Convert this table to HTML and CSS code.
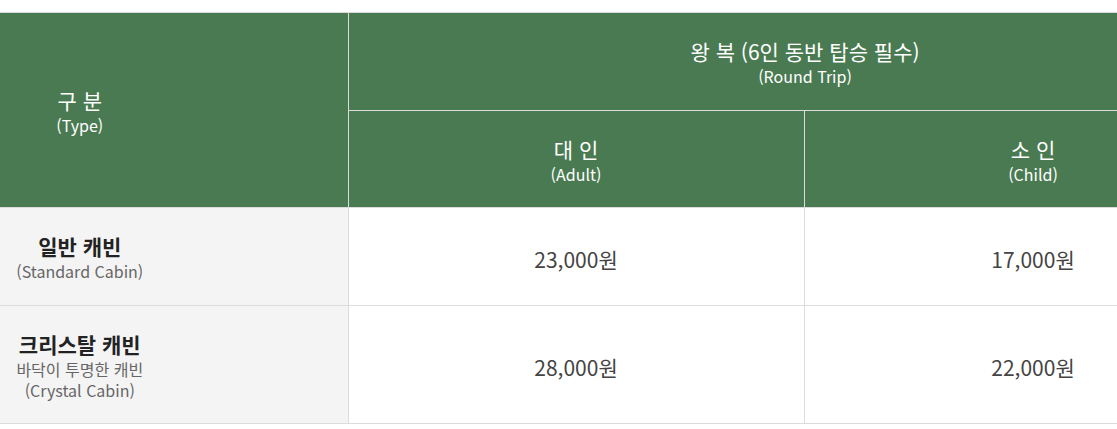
FILE: index.html
```html
<!DOCTYPE html>
<html lang="ko">
<head>
<meta charset="utf-8">
<title>요금 안내</title>
<link rel="stylesheet" href="styles.css">
</head>
<body>
<div class="wrap">
<table class="fare">
  <colgroup>
    <col class="c-type">
    <col class="c-adult">
    <col class="c-child">
  </colgroup>
  <thead>
    <tr class="h1">
      <th rowspan="2" class="h-type"><span class="t">구 분</span><span class="s">(Type)</span></th>
      <th colspan="2"><span class="t">왕 복 (6인 동반 탑승 필수)</span><span class="s">(Round Trip)</span></th>
    </tr>
    <tr class="h2">
      <th><span class="t">대 인</span><span class="s">(Adult)</span></th>
      <th><span class="t">소 인</span><span class="s">(Child)</span></th>
    </tr>
  </thead>
  <tbody>
    <tr class="r1">
      <th class="rowh"><span class="t">일반 캐빈</span><span class="s">(Standard Cabin)</span></th>
      <td>23,000원</td>
      <td>17,000원</td>
    </tr>
    <tr class="r2">
      <th class="rowh"><span class="t">크리스탈 캐빈</span><span class="s">바닥이 투명한 캐빈</span><span class="s">(Crystal Cabin)</span></th>
      <td>28,000원</td>
      <td>22,000원</td>
    </tr>
  </tbody>
</table>
</div>
</body>
</html>
```

FILE: styles.css
```css
html, body {
  margin: 0;
  padding: 0;
  background: #fff;
  overflow: hidden;
}

body {
  font-family: "Noto Sans CJK KR", "Noto Sans", sans-serif;
}

.wrap {
  padding-top: 12px;
  width: 1117px;
  overflow: hidden;
}

.fare {
  width: 1262px;
  table-layout: fixed;
  border-collapse: collapse;
  border-top: 1px solid #dcdcdc;
}

.c-type { width: 348px; }
.c-adult { width: 456px; }
.c-child { width: 458px; }

.fare th,
.fare td {
  text-align: center;
  vertical-align: middle;
  border: 1px solid #dcdcdc;
  padding: 0;
}

.fare tr > :first-child {
  border-left: 0;
}

.fare .h-type,
.fare .rowh {
  padding-right: 188px;
}

.fare thead th {
  background: #4a7a52;
  color: #fff;
  font-weight: 400;
}

.fare .h1 > * { height: 97px; }
.fare .h2 > * { height: 96px; }
.fare .h1 > .h-type { height: auto; }

.fare .t,
.fare .s {
  display: block;
}

.fare thead .t {
  font-size: 21px;
  line-height: 30px;
}

.fare thead .s {
  font-size: 16px;
  line-height: 21px;
}

.fare .rowh {
  background: #f4f4f4;
}

.fare .rowh .t {
  font-size: 21px;
  font-weight: 700;
  color: #222;
  line-height: 30px;
}

.fare .rowh .s {
  font-size: 16px;
  font-weight: 400;
  color: #666;
  line-height: 21px;
}

.fare tbody td {
  font-size: 21px;
  color: #444;
  background: #fff;
  padding-top: 5px;
}

.fare .r1 > * { height: 97px; }
.fare .r2 > * { height: 117px; }
.fare .r1 > td { height: 92px; }
.fare .r2 > td { height: 112px; }
```
